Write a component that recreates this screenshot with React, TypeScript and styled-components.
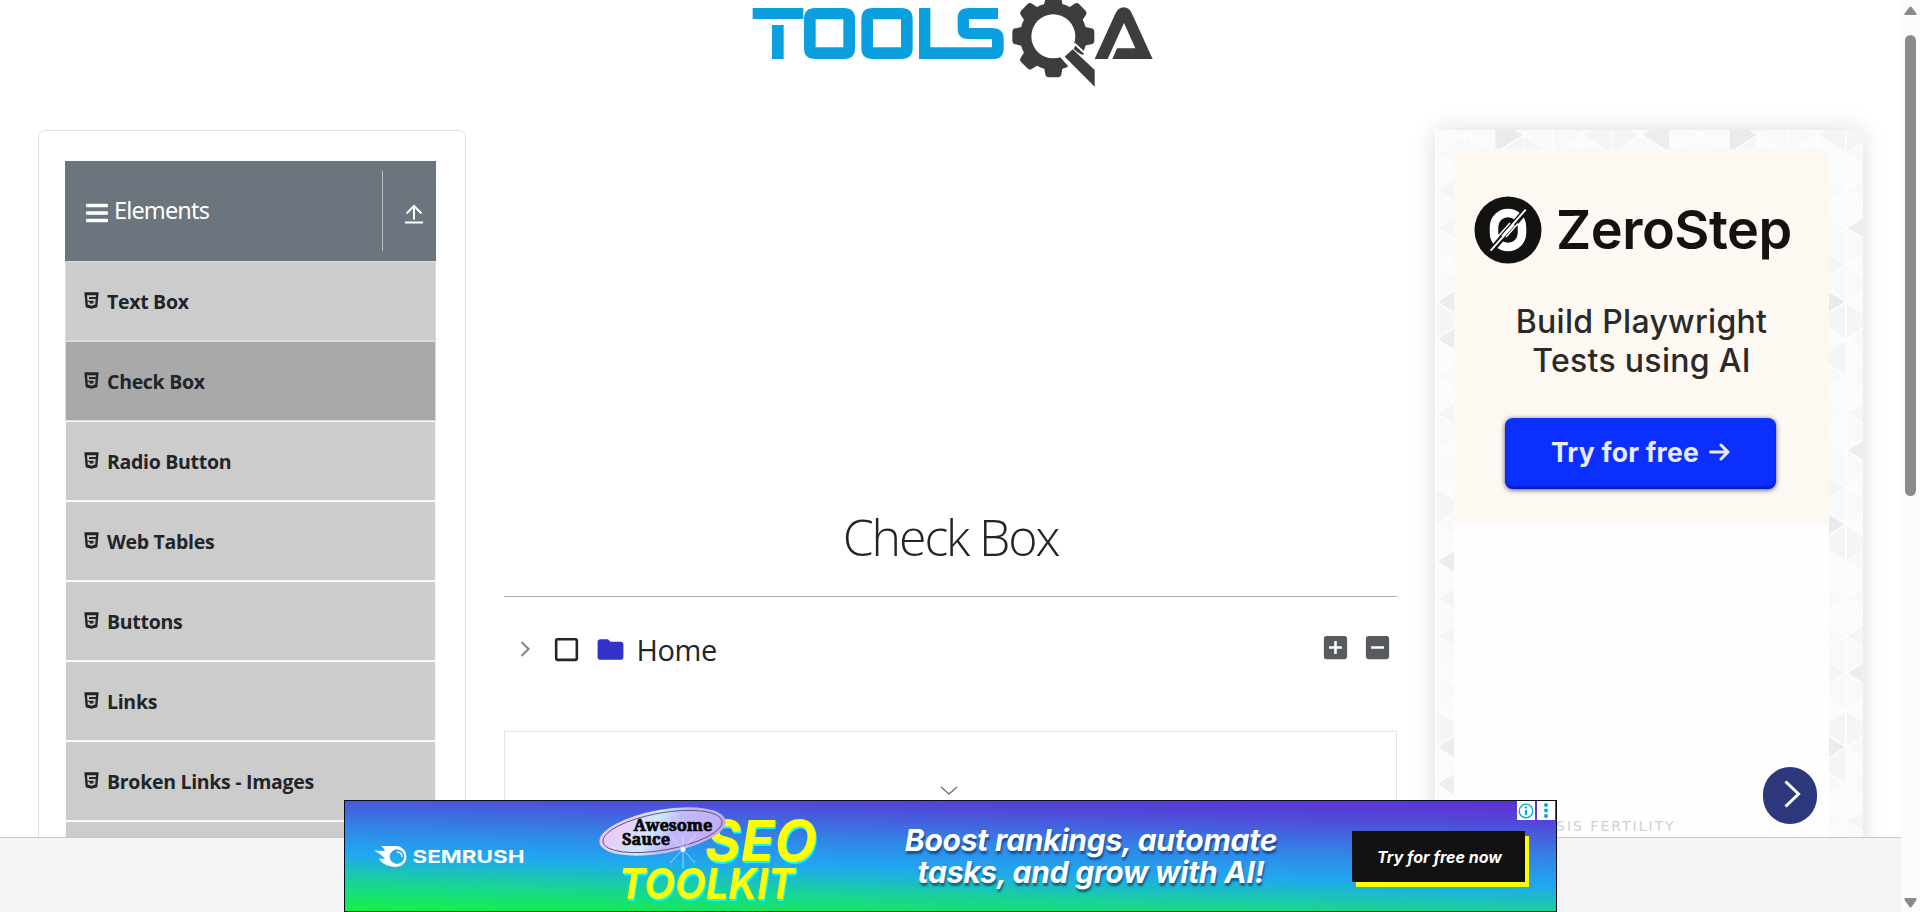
import React from 'react';
import styled, { createGlobalStyle } from 'styled-components';
import { IoLogoHtml5 } from 'react-icons/io5';
import { MdAddBox, MdCheckBoxOutlineBlank, MdFolder, MdIndeterminateCheckBox } from 'react-icons/md';

const GlobalStyle = createGlobalStyle`
  * { box-sizing: border-box; }
  html, body { margin: 0; padding: 0; overflow: hidden; background: #fff; }
  body { font-family: "Open Sans", "Noto Sans", sans-serif; color: #212529; }
  svg { display: block; flex: none; }
`;

const Window = styled.div`
  position: relative;
  display: flex;
  width: 1920px;
  height: 912px;
  overflow: hidden;
  background: #fff;
`;

const Page = styled.div`
  display: flex;
  flex-direction: column;
  width: 1901px;
`;

const Viewport = styled.div`
  height: 837px;
  overflow: hidden;
`;

const Header = styled.header`
  height: 130px;
  padding-left: 740px;
`;

const Columns = styled.div`
  display: flex;
  align-items: flex-start;
  padding-left: 38px;
`;

const SideCard = styled.aside`
  width: 428px;
  height: 740px;
  padding: 30px 29px 0 26px;
  border: 1px solid #dfdfdf;
  border-radius: 7px;
`;

const GroupHeader = styled.div`
  display: flex;
  align-items: center;
  width: 371px;
  height: 100px;
  padding-left: 21px;
  background: #6c757d;
  color: #fff;
`;

const BarsIcon = styled.svg`
  margin-top: 3px;
`;

const GroupTitle = styled.span`
  flex: 1;
  padding: 0 0 2px 6px;
  font-family: "Noto Sans", sans-serif;
  font-size: 23.5px;
  line-height: 30px;
  letter-spacing: -0.85px;
`;

const ToggleCell = styled.div`
  display: flex;
  align-items: center;
  height: 80px;
  width: 54px;
  padding: 6px 0 0 22px;
  border-left: 1px solid #bfbfbf;
`;

const Menu = styled.ul`
  width: 371px;
  margin: 0;
  padding: 0;
  list-style: none;
`;

const MenuItem = styled.li<{ $active?: boolean; $edged?: boolean }>`
  display: flex;
  align-items: center;
  height: 80px;
  padding: 0 0 1px 15.5px;
  border: 1px solid ${p => (p.$edged ? '#d9dde2' : '#f8f9fa')};
  background: ${p => (p.$active ? '#a9a9a9' : '#ccc')};
  font-size: 19.5px;
  font-weight: 700;
  line-height: 28px;
`;

const MenuLabel = styled.span`
  padding: 2px 0 0 6.5px;
  letter-spacing: -0.3px;
`;

const Content = styled.main`
  width: 893px;
  margin-left: 38px;
  padding-top: 371px;
`;

const Title = styled.h1`
  margin: 0;
  height: 96px;
  border-bottom: 1px solid #a9a9a9;
  text-align: center;
  font-size: 50px;
  font-weight: 300;
  line-height: 72px;
  letter-spacing: -2.1px;
`;

const Tree = styled.div`
  display: flex;
  align-items: center;
  height: 134px;
  padding: 0 4.5px 30px 16px;
`;

const TreeLabel = styled.span`
  flex: 1;
  margin-left: 11px;
  padding-top: 2px;
  font-size: 29px;
  line-height: 40px;
  letter-spacing: -0.4px;
`;

const TreeIcon = styled.span<{ $gap: number; $color: string; $lift?: number }>`
  margin-left: ${p => p.$gap}px;
  margin-bottom: ${p => p.$lift ?? 0}px;
  color: ${p => p.$color};
`;

const AdSlot = styled.div`
  display: flex;
  justify-content: center;
  height: 110px;
  padding: 54px 4px 0 0;
  border: 1px solid #e4e4e4;
`;

const AdColumn = styled.aside`
  position: relative;
  width: 428px;
  height: 740px;
  margin-left: 38px;
  padding: 19px 0 0 19px;
  background: #f8f8f8;
  box-shadow: 0 0 22px rgba(0, 0, 0, 0.14);
`;

const Mosaic = styled.svg`
  position: absolute;
  inset: 0;
`;

const AdWhite = styled.div`
  position: relative;
  width: 375px;
  height: 721px;
  background: #fefefe;
`;

const ZeroStep = styled.div`
  display: flex;
  flex-direction: column;
  align-items: center;
  height: 375px;
  background: #fdf8f2;
  font-family: Inter, sans-serif;
  color: #2b2a29;
`;

const ZeroBrand = styled.div`
  display: flex;
  align-items: center;
  width: 100%;
  height: 68px;
  margin-top: 47px;
  padding-left: 20px;
`;

const ZeroName = styled.span`
  margin: 0 0 0 14px;
  font-size: 54px;
  font-weight: 600;
  line-height: 68px;
  letter-spacing: -0.5px;
  color: #121211;
`;

const ZeroPitch = styled.p`
  margin: 38px 0 0;
  text-align: center;
  font-size: 32px;
  font-weight: 550;
  line-height: 39px;
  letter-spacing: 0.3px;
`;

const ZeroButton = styled.div`
  display: flex;
  align-items: center;
  justify-content: center;
  gap: 10px;
  width: 271px;
  height: 71px;
  margin: 38px 2px 0 0;
  padding-bottom: 4px;
  border-radius: 8px;
  background: #0a2fff;
  box-shadow: 0 1px 5px rgba(30, 30, 80, 0.75), inset 0 -2px 2px rgba(0, 0, 120, 0.5);
  font-size: 26.5px;
  font-weight: 700;
  letter-spacing: 0.25px;
  color: #e9ecff;
`;

const Caption = styled.div`
  margin: 293px 0 0 102px;
  font-family: "DejaVu Sans", sans-serif;
  font-size: 14px;
  line-height: 18px;
  letter-spacing: 2px;
  color: #d0d0d0;
`;

const NextButton = styled.div`
  position: absolute;
  left: 1763px;
  top: 767px;
  display: flex;
  align-items: center;
  justify-content: center;
  width: 54px;
  height: 57px;
  padding: 0 0 3px 4px;
  border-radius: 27px;
  background: #2c387b;
`;

const Footer = styled.footer`
  height: 75px;
  border-top: 1px solid #c8c8c8;
  background: #f4f4f4;
`;

const ScrollTrack = styled.div`
  display: flex;
  flex-direction: column;
  align-items: center;
  width: 19px;
  padding: 6px 0 4px;
  background: #fcfcfc;
`;

const ScrollThumb = styled.div`
  width: 11px;
  height: 461px;
  margin: 20px 0 auto;
  border-radius: 6px;
  background: #8b8b8b;
`;

const Banner = styled.div`
  position: absolute;
  left: 344px;
  top: 800px;
  display: flex;
  width: 1213px;
  height: 112px;
  border: 1px solid #061018;
  background: linear-gradient(181.5deg, #5f30d2 0%, #5148d8 16%, #2f8ae8 43%, #20a8f0 60%, #18d495 80%, #12ee4e 97%);
  font-family: Inter, sans-serif;
  color: #fff;
`;

const BannerArt = styled.svg`
  margin-left: 29px;
`;

const SeoText = styled.g`
  font-family: Inter, sans-serif;
  font-weight: 750;
  font-style: italic;
  fill: #ff0;
  filter: drop-shadow(1.5px 2px 0 #0ff);
`;

const Slogan = styled.div`
  width: 386px;
  margin: 23px 0 0 83px;
  text-align: center;
  font-size: 30px;
  font-style: italic;
  font-weight: 650;
  line-height: 32px;
  white-space: nowrap;
  letter-spacing: -0.25px;
  text-shadow: 1px 3px 2px rgba(0, 30, 80, 0.55);
`;

const TryNow = styled.div`
  display: flex;
  align-items: center;
  justify-content: center;
  width: 173px;
  height: 51px;
  margin: 30px 0 0 68px;
  padding-left: 2px;
  background: #111;
  box-shadow: 4px 5px 0 #ff0;
  font-size: 16px;
  font-style: italic;
  font-weight: 650;
  white-space: nowrap;
`;

const AdChoices = styled.div`
  position: absolute;
  top: 0;
  right: 1px;
  display: flex;
  gap: 2px;
`;

const Choice = styled.span`
  display: flex;
  align-items: center;
  justify-content: center;
  width: 18px;
  height: 19px;
  background: #fff;
`;

const COL = 29.29;
const ROW = 37.1;
const darkLeft = new Set(['0:4', '0:5', '0:11', '0:16', '0:17', '7:0', '14:2', '14:8', '14:14']);
const darkRight = new Set(['14:4', '14:10', '14:16', '3:0', '11:0']);

/* Triangular tiles: each vertex owns one tile to its right and one to its left. */
function TileMosaic() {
  const tiles: React.ReactElement[] = [];
  for (let c = -1; c <= 16; c++) {
    for (let r = -1; r <= 20; r++) {
      const x = 1 + c * COL;
      const y = 23.5 + r * ROW + (Math.abs(c) % 2 ? -18.5 : 0);
      const h = (c * 37 + r * 53 + 400) % 11;
      const k = `${c}:${r}`;
      const a = darkLeft.has(k) ? '#ededed' : h < 3 ? '#f5f5f5' : h < 7 ? '#f9f9f9' : '#fbfbfb';
      const b = darkRight.has(k) ? '#ebebeb' : h > 8 ? '#f5f5f5' : h > 4 ? '#fbfbfb' : '#f9f9f9';
      tiles.push(
        <path key={`a${k}`} fill={a} d={`M${x} ${y}l${COL} ${-ROW / 2}v${ROW}z`} />,
        <path key={`b${k}`} fill={b} d={`M${x} ${y}l${-COL} ${-ROW / 2}v${ROW}z`} />,
      );
    }
  }
  return (
    <Mosaic width="428" height="740" stroke="#fdfdfd" strokeWidth="1.6">
      {tiles}
    </Mosaic>
  );
}

function ToolsLogo() {
  const teeth = [0, 45, 90, 135, 180, 225, 270, 315];
  return (
    <svg width="430" height="100" viewBox="0 0 1290 300">
      <g fill="#0a9fdf">
        <path d="M38 24H190V57H38z" />
        <path d="M96 75h35v102H96z" />
        <path fillRule="evenodd" d="M226 24h86q33 0 33 33v87q0 33-33 33h-86q-34 0-34-33V57q0-33 34-33zM227 58v84h83V58z" />
        <path fillRule="evenodd" d="M398 24h86q34 0 34 33v87q0 33-34 33h-86q-34 0-34-33V57q0-33 34-33zM399 58v84h84V58z" />
        <path d="M537 24h34v118h185v-25h-70q-33 0-33-30V54q0-30 33-30h88v33h-87v27h68q36 0 36 32v30q0 31-33 31H537z" />
      </g>
      <g fill="#3d3d3d">
        <g transform="translate(940 109)">
          {teeth.map(t => (
            <path key={t} transform={`rotate(${t})`} d="M-34-84Q-25-98-24-114Q-23-122-14-123H14Q23-122 24-114Q25-98 34-84z" />
          ))}
          <path fillRule="evenodd" d="M0-101A101 101 0 1 1 0 101A101 101 0 1 1 0-101zM0-66A66 66 0 1 0 0 66A66 66 0 1 0 0-66z" />
        </g>
        <path fill="#fff" d="M955 165L1005 128L1090 208V290H1064z" />
        <path d="M1006 137L1033 162L1025 164Q1012 158 1001 147z" />
        <path d="M974 170L998 148L1064 210V260z" />
        <path d="M1064 177L1126 41Q1136 22 1151 22Q1167 22 1176 41L1238 177H1117L1131 145H1186L1152 69L1103 177z" />
      </g>
    </svg>
  );
}

function BannerGraphics() {
  return (
    <BannerArt width="441" height="110" viewBox="374 801 441 110" overflow="visible">
      <defs>
        <linearGradient id="pearl" x1="0" x2="1" y1="0.3" y2="0.6">
          <stop offset="0" stopColor="#f0c4f6" />
          <stop offset="0.22" stopColor="#e0d4fa" />
          <stop offset="0.42" stopColor="#cfe8fd" />
          <stop offset="0.6" stopColor="#c3b9fd" />
          <stop offset="0.9" stopColor="#c3b0fa" />
          <stop offset="1" stopColor="#c9a0ea" />
        </linearGradient>
      </defs>
      <path fill="#fff" fillRule="evenodd" d="M381 846H396A10.4 10.4 0 1 1 396 867C388 867 381 863 379 858.500L385 859Q380 853 374 850.500L385 851Q384 848 381 846zM397 849.500A7.200 7.200 0 1 0 397 863.900A7.200 7.200 0 1 0 397 849.500z" />
      <path fill="none" stroke="#fff" strokeWidth="1.4" strokeLinecap="round" d="M397.500 852q4 .4 4.500 4.500" />
      <text x="412.500" y="862.500" fill="#fff" fontSize="17.500" fontWeight="700" fontFamily="Inter, sans-serif" textLength="112" lengthAdjust="spacingAndGlyphs">SEMRUSH</text>
      <SeoText>
        <text x="705" y="861" fontSize="57" textLength="112" lengthAdjust="spacingAndGlyphs">SEO</text>
        <text x="619" y="898.500" fontSize="43" textLength="176" lengthAdjust="spacingAndGlyphs">TOOLKIT</text>
      </SeoText>
      <g transform="rotate(-10 662.500 831.500)">
        <ellipse cx="662.500" cy="831.500" rx="64" ry="21.800" fill="url(#pearl)" />
        <ellipse cx="662.500" cy="831.500" rx="60.500" ry="18.600" fill="none" stroke="#494463" strokeWidth="0.800" />
      </g>
      <g fontFamily="'Noto Serif', 'Liberation Serif', serif" fontWeight="700" fontSize="16" fill="#050505" stroke="#050505" strokeWidth="0.700">
        <text x="633.500" y="830.500" textLength="79" lengthAdjust="spacingAndGlyphs">Awesome</text>
        <text x="622" y="844.500" textLength="48" lengthAdjust="spacingAndGlyphs">Sauce</text>
      </g>
      <g stroke="#e8f0ff" strokeWidth="0.900">
        <path d="M683 836v32M670 863l26-28M672 837l23 26" opacity="0.750" />
        <circle cx="683" cy="849.500" r="2.200" fill="#fff" />
      </g>
    </BannerArt>
  );
}

const entries = ['Text Box', 'Check Box', 'Radio Button', 'Web Tables', 'Buttons', 'Links', 'Broken Links - Images', ''];

export default function App() {
  return (
    <Window>
      <GlobalStyle />
      <Page>
        <Viewport>
          <Header><ToolsLogo /></Header>
          <Columns>
            <SideCard>
              <GroupHeader>
                <BarsIcon width="22" height="20" viewBox="0 0 22 20">
                  <path d="M1.500 2.500h19M1.500 10h19M1.500 17.500h19" stroke="#fff" strokeWidth="3.600" strokeLinecap="round" />
                </BarsIcon>
                <GroupTitle>Elements</GroupTitle>
                <ToggleCell>
                  <svg width="18" height="20" viewBox="0 0 18 20" fill="none" stroke="#fff">
                    <path d="M9 15.500V2M1.500 9.500L9 2l7.500 7.500" strokeWidth="2" />
                    <path d="M0 18.500h18" strokeWidth="2" />
                  </svg>
                </ToggleCell>
              </GroupHeader>
              <Menu>
                {entries.map((label, i) => (
                  <MenuItem key={i} $active={i === 1} $edged={i < 2}>
                    {label && <IoLogoHtml5 size={19} />}
                    <MenuLabel>{label}</MenuLabel>
                  </MenuItem>
                ))}
              </Menu>
            </SideCard>
            <Content>
              <Title>Check Box</Title>
              <Tree>
                <svg width="11" height="16" viewBox="0 0 11 16" fill="none" stroke="#8a8c8e" strokeWidth="2.300">
                  <path d="M1.500 1l7 7-7 7" />
                </svg>
                <TreeIcon $gap={20} $color="#212529"><MdCheckBoxOutlineBlank size={31} /></TreeIcon>
                <TreeIcon $gap={12.5} $color="#33c"><MdFolder size={31} /></TreeIcon>
                <TreeLabel>Home</TreeLabel>
                <TreeIcon $gap={0} $color="#575a5e" $lift={4}><MdAddBox size={31} /></TreeIcon>
                <TreeIcon $gap={11} $color="#575a5e" $lift={4}><MdIndeterminateCheckBox size={31} /></TreeIcon>
              </Tree>
              <AdSlot>
                <svg width="18" height="10" viewBox="0 0 18 10" fill="none" stroke="#777" strokeWidth="1.500">
                  <path d="M1 1l8 7 8-7" />
                </svg>
              </AdSlot>
            </Content>
            <AdColumn>
              <TileMosaic />
              <AdWhite>
                <ZeroStep>
                  <ZeroBrand>
                    <svg width="68" height="68" viewBox="0 0 68 68">
                      <circle cx="34" cy="34" r="33.500" fill="#121211" />
                      <rect x="20" y="17" width="28" height="34" rx="14" fill="none" stroke="#fff" strokeWidth="8.500" />
                      <path d="M16 56L53 13" stroke="#121211" strokeWidth="6" />
                      <path d="M16.700 54.700L40 28.500M51.700 13.700L28 40.500" stroke="#fff" strokeWidth="1.900" />
                      <path d="M24 40.500L36 27M32 41L44 27.500" stroke="#fff" strokeWidth="1.500" />
                    </svg>
                    <ZeroName>ZeroStep</ZeroName>
                  </ZeroBrand>
                  <ZeroPitch>Build Playwright<br />Tests using AI</ZeroPitch>
                  <ZeroButton>
                    Try for free
                    <svg width="21" height="18" viewBox="0 0 21 18" fill="none" stroke="#e9ecff" strokeWidth="3" strokeLinecap="round" strokeLinejoin="round">
                      <path d="M1.500 9H19M12 2l7 7-7 7" />
                    </svg>
                  </ZeroButton>
                </ZeroStep>
                <Caption>SIS FERTILITY</Caption>
              </AdWhite>
            </AdColumn>
          </Columns>
        </Viewport>
        <Footer />
      </Page>
      <ScrollTrack>
        <svg width="13" height="9" viewBox="0 0 13 9"><path d="M5.500 1Q6.500 0 7.500 1L12.500 7.500Q13 9 11.500 9H1.500Q0 9 .5 7.500z" fill="#8b8b8b" /></svg>
        <ScrollThumb />
        <svg width="13" height="10" viewBox="0 0 13 10"><path d="M5.500 9Q6.500 10 7.500 9L12.500 2Q13 0 11.500 0H1.500Q0 0 .5 2z" fill="#8b8b8b" /></svg>
      </ScrollTrack>
      <NextButton>
        <svg width="20" height="28" viewBox="0 0 20 28" fill="none" stroke="#fff" strokeWidth="3">
          <path d="M3.500 1.500L16.500 14L3.500 26.500" />
        </svg>
      </NextButton>
      <Banner>
        <BannerGraphics />
        <Slogan>Boost rankings, automate<br />tasks, and grow with AI!</Slogan>
        <TryNow>Try for free now</TryNow>
        <AdChoices>
          <Choice>
            <svg width="16" height="16" viewBox="0 0 16 16" fill="none" stroke="#00aecd">
              <circle cx="8" cy="8" r="6.800" strokeWidth="1.300" />
              <path d="M8 7v5M8 3.500v2" strokeWidth="2.200" />
            </svg>
          </Choice>
          <Choice>
            <svg width="4" height="15" viewBox="0 0 4 15" fill="#00aecd">
              <circle cx="2" cy="2" r="2" /><circle cx="2" cy="7.500" r="2" /><circle cx="2" cy="13" r="2" />
            </svg>
          </Choice>
        </AdChoices>
      </Banner>
    </Window>
  );
}
